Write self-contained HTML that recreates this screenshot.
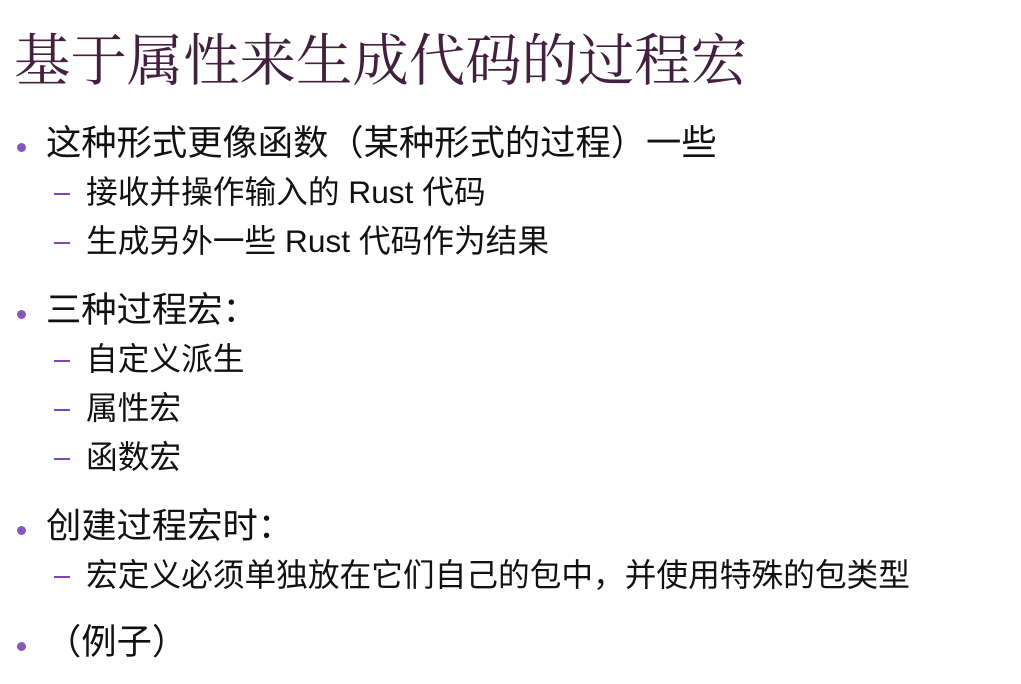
<!DOCTYPE html>
<html><head><meta charset="utf-8"><style>
body{margin:0;width:1021px;height:684px;background:#fff;overflow:hidden;position:relative;font-family:"Liberation Sans","Noto Sans CJK SC",sans-serif;color:#111}
.t{position:absolute;left:14px;top:32px;font-size:56.4px;line-height:60px;color:#43203f;font-family:"Liberation Serif","Noto Serif CJK SC",serif;white-space:nowrap}
.b{position:absolute;left:46px;font-size:35.3px;line-height:40px;white-space:nowrap}
.b:before{content:"";position:absolute;left:-29px;top:19px;width:9px;height:9px;border-radius:50%;background:#8758b8}
.s{position:absolute;left:86px;font-size:31.7px;line-height:36px;white-space:nowrap}
.s:before{content:"";position:absolute;left:-32px;top:19px;width:16px;height:2px;background:#7a4ab0}
</style></head><body>
<div class="t">基于属性来生成代码的过程宏</div>
<div class="b" style="top:124px">这种形式更像函数（某种形式的过程）一些</div>
<div class="s" style="top:174px">接收并操作输入的 Rust 代码</div>
<div class="s" style="top:223px">生成另外一些 Rust 代码作为结果</div>
<div class="b" style="top:291px">三种过程宏：</div>
<div class="s" style="top:341px">自定义派生</div>
<div class="s" style="top:390px">属性宏</div>
<div class="s" style="top:439px">函数宏</div>
<div class="b" style="top:507px">创建过程宏时：</div>
<div class="s" style="top:557px">宏定义必须单独放在它们自己的包中，并使用特殊的包类型</div>
<div class="b" style="top:623px">（例子）</div>
</body></html>
